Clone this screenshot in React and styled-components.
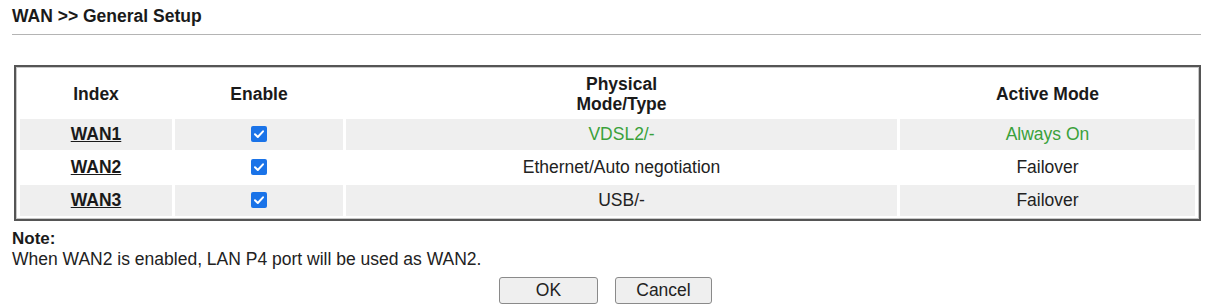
import React from 'react'
import styled, { createGlobalStyle } from 'styled-components'

const Global = createGlobalStyle`
  html, body {
    margin: 0;
    padding: 0;
    background: #fff;
  }
  body {
    font-family: "Liberation Sans", Arial, sans-serif;
    color: #222;
  }
`

const Page = styled.div`
  width: 1209px;
  height: 308px;
  padding: 6px 8px 0 12px;
  box-sizing: border-box;
`

const Title = styled.h1`
  margin: 0;
  font-size: 17.5px;
  line-height: 20px;
  font-weight: bold;
  color: #1a1a1a;
`

const Rule = styled.hr`
  margin: 8px 0 0 0;
  border: 0;
  height: 1px;
  background: #b4b4b4;
`

const Table = styled.table`
  margin: 30px 0 0 2px;
  width: 1187px;
  border: 2px solid #555;
  box-shadow: inset 0 0 0 1px #c8c8c8;
  border-spacing: 3px 2px;
  padding: 1px;
  table-layout: fixed;
`

const Head = styled.th`
  font-size: 17.5px;
  font-weight: bold;
  color: #1a1a1a;
  height: 47px;
  line-height: 20px;
  padding: 0;
  text-align: center;
`

const Row = styled.tr`
  background: ${p => (p.$shaded ? '#efefef' : 'transparent')};
`

const Cell = styled.td`
  height: 31px;
  padding: 0;
  text-align: center;
  font-size: 17.5px;
  color: ${p => (p.$green ? '#3aa13a' : '#222')};
`

const WanLink = styled.a`
  font-weight: bold;
  color: #1a1a1a;
  text-decoration: underline;
  cursor: pointer;
`

const Check = styled.span`
  display: inline-block;
  width: 16px;
  height: 16px;
  border-radius: 2px;
  background: #1a73e8;
  vertical-align: middle;
  position: relative;
  top: -1px;
  svg {
    display: block;
  }
`

const NoteTitle = styled.div`
  margin-top: 7px;
  font-size: 17px;
  font-weight: bold;
  color: #1a1a1a;
  line-height: 21px;
`

const NoteText = styled.div`
  font-size: 17.5px;
  line-height: 21px;
  color: #222;
`

const Buttons = styled.div`
  display: flex;
  justify-content: center;
  gap: 17px;
  margin-top: 7px;
  padding-right: 2px;
`

const Button = styled.button`
  width: ${p => p.$w}px;
  height: 27px;
  background: #efefef;
  border: 1px solid #8a8a8a;
  border-radius: 3px;
  font-family: "Liberation Sans", Arial, sans-serif;
  font-size: 17.5px;
  color: #222;
  padding: 0;
`

const Tick = () => (
  <svg width="16" height="16" viewBox="0 0 16 16">
    <path d="M4 8.3 L6.8 11 L12 5.3" fill="none" stroke="#fff" strokeWidth="2" strokeLinecap="round" strokeLinejoin="round" />
  </svg>
)

const rows = [
  { name: 'WAN1', type: 'VDSL2/-', mode: 'Always On', green: true },
  { name: 'WAN2', type: 'Ethernet/Auto negotiation', mode: 'Failover' },
  { name: 'WAN3', type: 'USB/-', mode: 'Failover' },
]

const App = () => {
  return (
    <Page>
      <Global />
      <Title>WAN &gt;&gt; General Setup</Title>
      <Rule />
      <Table>
        <colgroup>
          <col style={{ width: 152 }} />
          <col style={{ width: 168 }} />
          <col style={{ width: 551 }} />
          <col />
        </colgroup>
        <thead>
          <tr>
            <Head>Index</Head>
            <Head>Enable</Head>
            <Head>Physical<br />Mode/Type</Head>
            <Head>Active Mode</Head>
          </tr>
        </thead>
        <tbody>
          {rows.map((r, i) => (
            <Row key={r.name} $shaded={i % 2 === 0}>
              <Cell><WanLink>{r.name}</WanLink></Cell>
              <Cell><Check><Tick /></Check></Cell>
              <Cell $green={r.green}>{r.type}</Cell>
              <Cell $green={r.green}>{r.mode}</Cell>
            </Row>
          ))}
        </tbody>
      </Table>
      <NoteTitle>Note:</NoteTitle>
      <NoteText>When WAN2 is enabled, LAN P4 port will be used as WAN2.</NoteText>
      <Buttons>
        <Button $w={99}>OK</Button>
        <Button $w={97}>Cancel</Button>
      </Buttons>
    </Page>
  )
}

export default App
